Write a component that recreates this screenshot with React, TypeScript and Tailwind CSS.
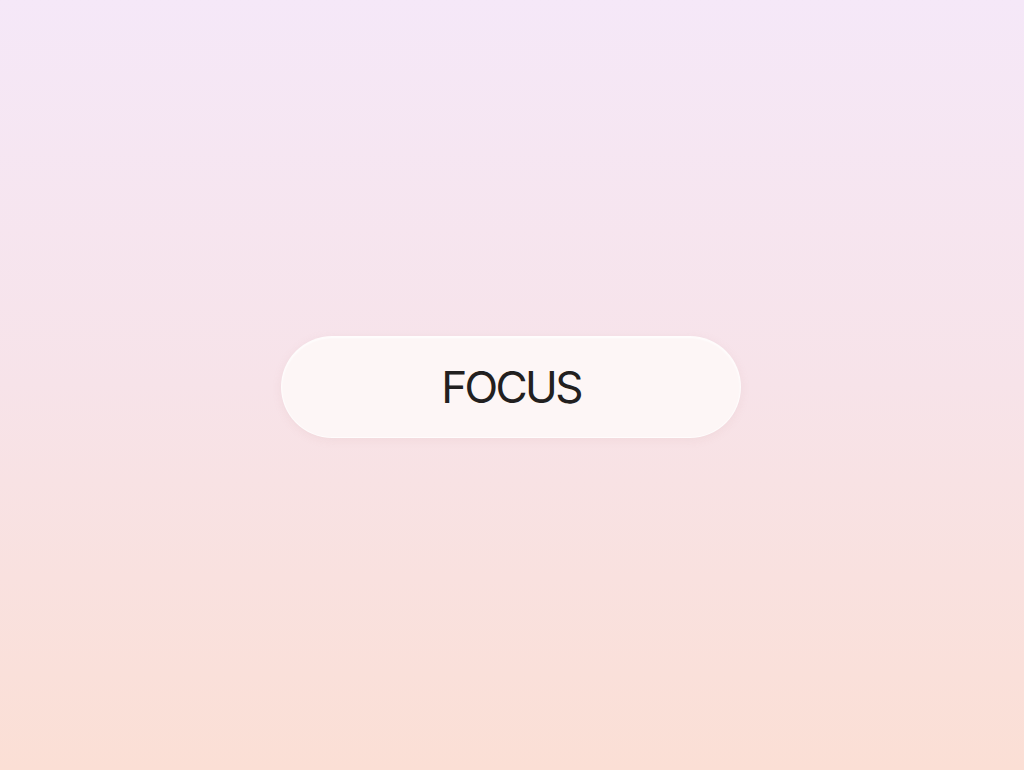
export default function App() {
  return (
    <div className="flex h-[770px] w-full items-center justify-center bg-gradient-to-b from-[#f5e8f8] via-[#f7e3e9] to-[#fbdfd5]">
      <button className="mt-[4px] mr-[2px] flex h-[102px] w-[460px] items-center justify-center rounded-full border border-white/70 bg-[#fdf6f6] shadow-[0_2px_10px_rgba(200,150,150,0.12),inset_0_1px_2px_rgba(255,255,255,0.9)]">
        <span className="font-['Inter','Liberation_Sans',sans-serif] text-[44px] font-normal leading-none tracking-[-0.06em] text-[#222020]">
          FOCUS
        </span>
      </button>
    </div>
  );
}
